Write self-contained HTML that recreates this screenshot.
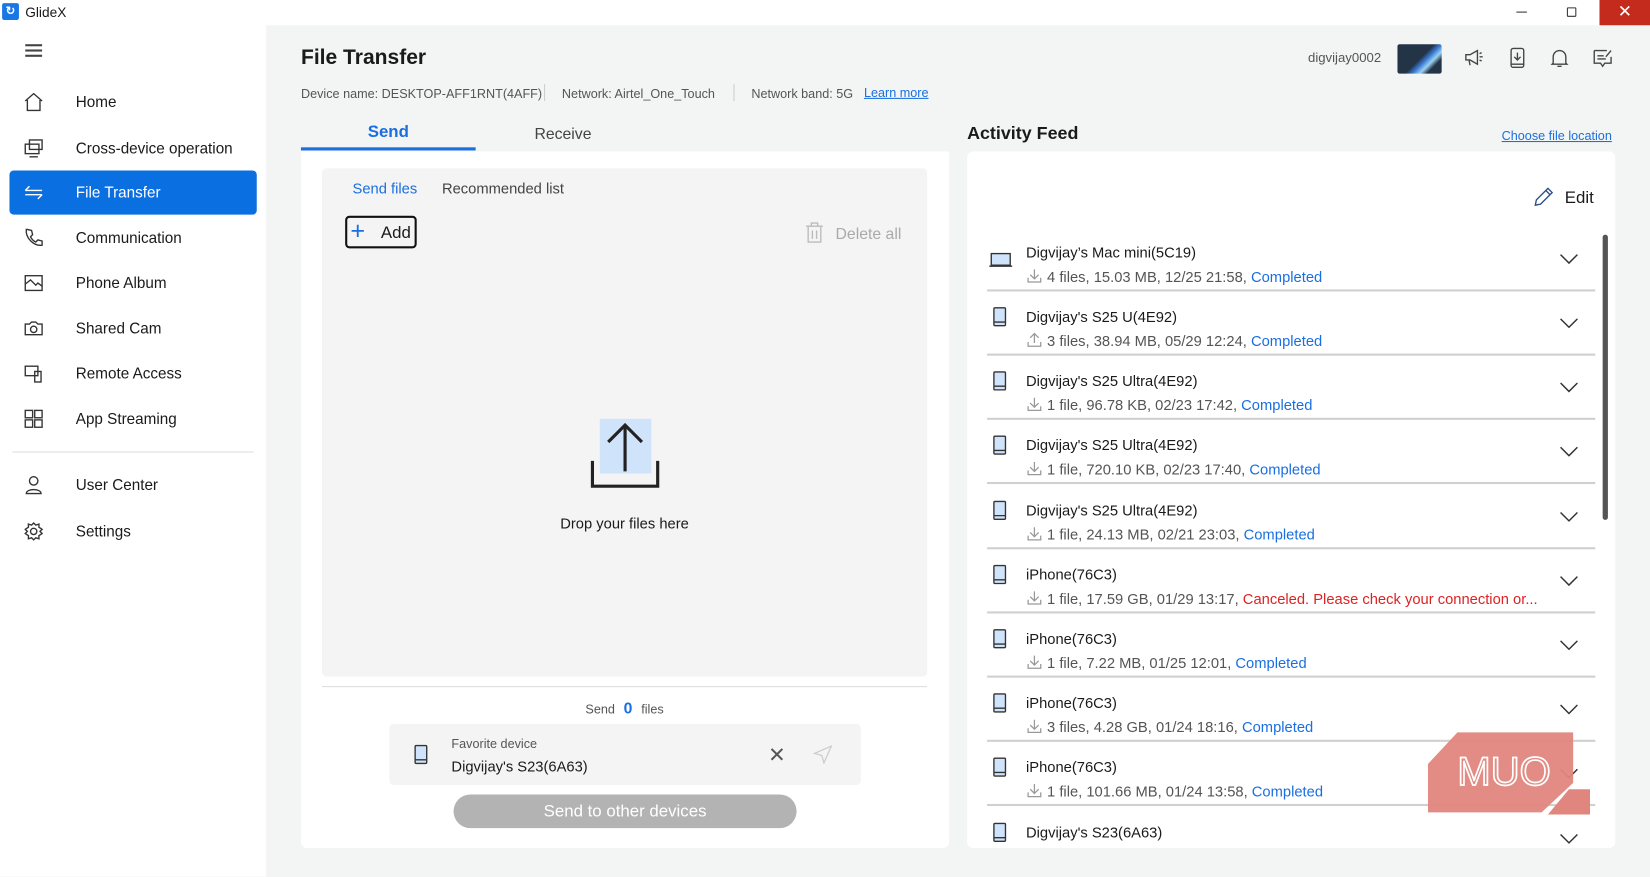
<!DOCTYPE html>
<html><head><meta charset="utf-8"><style>
*{box-sizing:border-box;margin:0;padding:0}
html,body{width:1650px;height:877px;overflow:hidden;background:#f3f4f4;font-family:"Liberation Sans",sans-serif;color:#1a1a1a}
#w{position:absolute;left:0;top:0;width:1568px;height:833px;transform:scale(1.0523);transform-origin:0 0;background:#f3f4f4}
.a{position:absolute;white-space:nowrap}
.nav{position:absolute;left:72px;font-size:14.5px;color:#1a1a1a;transform:translateY(-45%)}
.ic{position:absolute;left:22px;width:20px;height:20px;transform:translateY(-50%)}
.row .t{position:absolute;left:975px;font-size:14px;transform:translateY(-45%)}
.row .s{position:absolute;left:995px;font-size:14px;color:#555;transform:translateY(-45%)}
.c{color:#1a6fe0}.r{color:#d22}
</style></head><body><div id="w">
<div class="a" style="left:0;top:0;width:1568px;height:24px;background:#fff"></div>
<div class="a" style="left:2px;top:3px;width:16px;height:16px;background:#1877e6;border-radius:2px;color:#fff;font-size:11px;text-align:center;line-height:16px;font-weight:bold">↻</div>
<div class="a" style="left:24px;top:4px;font-size:13px">GlideX</div>
<div class="a" style="left:1441px;top:11px;width:10px;height:1px;background:#333"></div>
<div class="a" style="left:1489px;top:7px;width:9px;height:9px;border:1px solid #333;border-radius:1px"></div>
<div class="a" style="left:1520px;top:0;width:48px;height:24px;background:#c42b1c;color:#fff;text-align:center;font-size:16px;line-height:24px">✕</div>
<div class="a" style="left:0;top:24px;width:253px;height:809px;background:#fff"></div>
<div class="a" style="left:24px;top:42px;width:16px;height:2px;background:#444;box-shadow:0 5px 0 #444,0 10px 0 #444"></div>
<div class="a" style="left:9px;top:162px;width:235px;height:42px;background:#0a6fe0;border-radius:4px"></div>
<svg class="ic" style="top:97px" viewBox="0 0 20 20" fill="none" stroke="#333" stroke-width="1.3"><path d="M2 9L10 2l8 7M4 8v10h12V8"/></svg>
<div class="nav" style="top:97px">Home</div>
<svg class="ic" style="top:141px" viewBox="0 0 20 20" fill="none" stroke="#333" stroke-width="1.3"><rect x="2" y="6" width="13" height="9"/><rect x="6" y="2" width="12" height="9"/><path d="M6 18h8"/></svg>
<div class="nav" style="top:141px">Cross-device operation</div>
<svg class="ic" style="top:183px" viewBox="0 0 20 20" fill="none" stroke="#fff" stroke-width="1.3"><path d="M2 8h16M6 4L2 8M18 12H2M14 16l4-4"/></svg>
<div class="nav" style="top:183px;color:#fff">File Transfer</div>
<svg class="ic" style="top:226px" viewBox="0 0 20 20" fill="none" stroke="#333" stroke-width="1.3"><path d="M4 2l4 1 1 4-2 2c1 2 3 4 5 5l2-2 4 1 0 4c-8 1-16-7-15-15z"/></svg>
<div class="nav" style="top:226px">Communication</div>
<svg class="ic" style="top:269px" viewBox="0 0 20 20" fill="none" stroke="#333" stroke-width="1.3"><rect x="2" y="3" width="16" height="14"/><path d="M2 11l5-4 5 5 2-2 4 3"/></svg>
<div class="nav" style="top:269px">Phone Album</div>
<svg class="ic" style="top:312px" viewBox="0 0 20 20" fill="none" stroke="#333" stroke-width="1.3"><path d="M2 6h4l2-2h4l2 2h4v10H2z"/><circle cx="10" cy="11" r="3"/></svg>
<div class="nav" style="top:312px">Shared Cam</div>
<svg class="ic" style="top:355px" viewBox="0 0 20 20" fill="none" stroke="#333" stroke-width="1.3"><rect x="2" y="3" width="12" height="9"/><rect x="11" y="8" width="6" height="10"/></svg>
<div class="nav" style="top:355px">Remote Access</div>
<svg class="ic" style="top:398px" viewBox="0 0 20 20" fill="none" stroke="#333" stroke-width="1.3"><rect x="2" y="2" width="7" height="7"/><rect x="11" y="2" width="7" height="7"/><rect x="2" y="11" width="7" height="7"/><rect x="11" y="11" width="7" height="7"/></svg>
<div class="nav" style="top:398px">App Streaming</div>
<div class="a" style="left:12px;top:429px;width:229px;height:1px;background:#ddd"></div>
<svg class="ic" style="top:461px" viewBox="0 0 20 20" fill="none" stroke="#333" stroke-width="1.3"><circle cx="10" cy="6" r="4"/><path d="M3 18c0-5 14-5 14 0z"/></svg>
<div class="nav" style="top:461px">User Center</div>
<svg class="ic" style="top:505px" viewBox="0 0 20 20" fill="none" stroke="#333" stroke-width="1.3"><circle cx="10" cy="10" r="3"/><path d="M10 2l2 2 3-1 0 3 3 2-2 2 2 2-3 2 0 3-3-1-2 2-2-2-3 1 0-3-3-2 2-2-2-2 3-2 0-3 3 1z"/></svg>
<div class="nav" style="top:505px">Settings</div>
<div class="a" style="left:286px;top:44px;font-size:20px;font-weight:bold">File Transfer</div>
<div class="a" style="left:286px;top:82px;font-size:12px;color:#555">Device name: DESKTOP-AFF1RNT(4AFF)</div>
<div class="a" style="left:517px;top:80px;width:1px;height:16px;background:#ccc"></div>
<div class="a" style="left:534px;top:82px;font-size:12px;color:#555">Network: Airtel_One_Touch</div>
<div class="a" style="left:697px;top:80px;width:1px;height:16px;background:#ccc"></div>
<div class="a" style="left:714px;top:82px;font-size:12px;color:#555">Network band: 5G</div>
<div class="a" style="left:821px;top:81px;font-size:12px;color:#1a6fe0;text-decoration:underline">Learn more</div>
<div class="a" style="left:1243px;top:48px;font-size:12.5px;color:#555">digvijay0002</div>
<div class="a" style="left:1328px;top:42px;width:42px;height:28px;background:linear-gradient(135deg,#243447 50%,#3a7bd5 60%,#9cd3f0 70%,#243447 80%);border-radius:2px"></div>
<svg class="a" style="left:1391px;top:45px" width="20" height="20" viewBox="0 0 20 20" fill="none" stroke="#444" stroke-width="1.3"><path d="M2 7h4l7-4v13l-7-4H2zM5 12l1 5M15 6l2-1M15 9h3M15 12l2 1"/></svg>
<svg class="a" style="left:1432px;top:44px" width="20" height="22" viewBox="0 0 20 22" fill="none" stroke="#444" stroke-width="1.3"><rect x="4" y="2" width="12" height="18" rx="2"/><path d="M10 6v7M7 10l3 3 3-3M4 17h12"/></svg>
<svg class="a" style="left:1472px;top:45px" width="20" height="20" viewBox="0 0 20 20" fill="none" stroke="#444" stroke-width="1.3"><path d="M4 15V9a6 6 0 0112 0v6l1 1H3zM8 18h4"/></svg>
<svg class="a" style="left:1513px;top:45px" width="20" height="20" viewBox="0 0 20 20" fill="none" stroke="#444" stroke-width="1.3"><path d="M2 3h12M2 3v12h6l2 3 2-3h6V9M5 8h6M5 11h8M13 9l5-6"/></svg>
<div class="a" style="left:286px;top:117px;width:166px;text-align:center;font-size:16px;font-weight:bold;color:#1a6fe0">Send</div>
<div class="a" style="left:452px;top:119px;width:166px;text-align:center;font-size:15px;color:#444">Receive</div>
<div class="a" style="left:286px;top:140px;width:166px;height:3px;background:#1a6fe0"></div>
<div class="a" style="left:286px;top:144px;width:616px;height:662px;background:#fff;border-radius:0 0 6px 6px"></div>
<div class="a" style="left:306px;top:160px;width:575px;height:483px;background:#f4f4f4;border-radius:4px"></div>
<div class="a" style="left:335px;top:171px;font-size:14px;color:#1a6fe0">Send files</div>
<div class="a" style="left:420px;top:171px;font-size:14px;color:#444">Recommended list</div>
<div class="a" style="left:328px;top:205px;width:68px;height:31px;border:2px solid #111;border-radius:4px"></div>
<div class="a" style="left:333px;top:206px;font-size:24px;color:#1a6fe0;font-weight:300">+</div>
<div class="a" style="left:362px;top:213px;font-size:16px">Add</div>
<svg class="a" style="left:765px;top:211px" width="18" height="20" viewBox="0 0 18 20" fill="none" stroke="#bbb" stroke-width="1.3"><path d="M1 4h16M6 4V1h6v3M3 4v15h12V4M7 8v8M11 8v8"/></svg>
<div class="a" style="left:794px;top:214px;font-size:15px;color:#aaa">Delete all</div>
<div class="a" style="left:570px;top:398px;width:49px;height:52px;background:#cfe3fb"></div>
<svg class="a" style="left:558px;top:400px" width="72" height="66" viewBox="0 0 72 66" fill="none" stroke="#222" stroke-width="3"><path d="M36 4v44M20 20L36 4l16 16M5 38v24h62V38"/></svg>
<div class="a" style="left:306px;top:489px;width:575px;text-align:center;font-size:14px">Drop your files here</div>
<div class="a" style="left:306px;top:652px;width:575px;height:1px;background:#ddd"></div>
<div class="a" style="left:306px;top:665px;width:575px;text-align:center;font-size:12px;color:#555">Send <b style="color:#1a6fe0;font-size:15px;margin:0 5px">0</b> files</div>
<div class="a" style="left:370px;top:688px;width:448px;height:58px;background:#f4f4f4;border-radius:4px"></div>
<svg class="a" style="left:393px;top:707px" width="14" height="20" viewBox="0 0 14 20" fill="none" stroke="#333" stroke-width="1.3"><rect x="1.5" y="1.5" width="11" height="17" rx="1" fill="#cfe3fb"/><path d="M1.5 15h11"/></svg>
<div class="a" style="left:429px;top:700px;font-size:12px;color:#555">Favorite device</div>
<div class="a" style="left:429px;top:720px;font-size:14px">Digvijay's S23(6A63)</div>
<div class="a" style="left:730px;top:705px;font-size:20px;color:#555">✕</div>
<svg class="a" style="left:773px;top:708px" width="18" height="18" viewBox="0 0 18 18" fill="none" stroke="#ccc" stroke-width="1.2"><path d="M17 1L1 8l7 2 2 7z"/></svg>
<div class="a" style="left:431px;top:755px;width:326px;height:32px;background:#b3b3b3;border-radius:16px;color:#fff;text-align:center;line-height:33px;font-size:16px">Send to other devices</div>
<div class="a" style="left:919px;top:117px;font-size:17px;font-weight:bold">Activity Feed</div>
<div class="a" style="left:1427px;top:122px;font-size:12px;color:#1a6fe0;text-decoration:underline">Choose file location</div>
<div class="a" style="left:919px;top:144px;width:616px;height:662px;background:#fff;border-radius:6px"></div>
<svg class="a" style="left:1457px;top:177px" width="20" height="20" viewBox="0 0 20 20" fill="none" stroke="#2a4f8a" stroke-width="1.3"><path d="M2 18l1-5L14 2l4 4L7 17zM12 4l4 4"/></svg>
<div class="a" style="left:1487px;top:180px;font-size:16px">Edit</div>
<div class="a" style="left:1523px;top:223px;width:5px;height:271px;background:#555;border-radius:3px"></div>
<div class="row">
<svg class="a" style="left:940px;top:239px" width="22" height="16" viewBox="0 0 22 16" fill="none" stroke="#333" stroke-width="1.3"><rect x="2" y="2" width="18" height="11" fill="#cfe3fb"/><path d="M0 14h22"/></svg>
<div class="t" style="top:239px">Digvijay’s Mac mini(5C19)</div><div class="s" style="top:262px">4 files, 15.03 MB, 12/25 21:58, <span class="c">Completed</span></div>
<div class="t" style="top:300px">Digvijay's S25 U(4E92)</div><div class="s" style="top:323px">3 files, 38.94 MB, 05/29 12:24, <span class="c">Completed</span></div>
<div class="t" style="top:361px">Digvijay's S25 Ultra(4E92)</div><div class="s" style="top:384px">1 file, 96.78 KB, 02/23 17:42, <span class="c">Completed</span></div>
<div class="t" style="top:422px">Digvijay's S25 Ultra(4E92)</div><div class="s" style="top:445px">1 file, 720.10 KB, 02/23 17:40, <span class="c">Completed</span></div>
<div class="t" style="top:484px">Digvijay's S25 Ultra(4E92)</div><div class="s" style="top:507px">1 file, 24.13 MB, 02/21 23:03, <span class="c">Completed</span></div>
<div class="t" style="top:545px">iPhone(76C3)</div><div class="s" style="top:568px">1 file, 17.59 GB, 01/29 13:17, <span class="r">Canceled. Please check your connection or...</span></div>
<div class="t" style="top:606px">iPhone(76C3)</div><div class="s" style="top:629px">1 file, 7.22 MB, 01/25 12:01, <span class="c">Completed</span></div>
<div class="t" style="top:667px">iPhone(76C3)</div><div class="s" style="top:690px">3 files, 4.28 GB, 01/24 18:16, <span class="c">Completed</span></div>
<div class="t" style="top:728px">iPhone(76C3)</div><div class="s" style="top:751px">1 file, 101.66 MB, 01/24 13:58, <span class="c">Completed</span></div>
<div class="t" style="top:790px">Digvijay's S23(6A63)</div>
</div>
<div id="rows"></div>
<script>
var ys=[239,300,361,422,484,545,606,667,728,790],h='';
ys.forEach(function(y,i){
 if(i>0)h+='<svg class="a" style="left:943px;top:'+(y-9)+'px" width="14" height="20" viewBox="0 0 14 20" fill="none" stroke="#333" stroke-width="1.3"><rect x="1.5" y="1.5" width="11" height="17" rx="1" fill="#cfe3fb"/><path d="M1.5 15h11"/></svg>';
 h+='<svg class="a" style="left:1482px;top:'+(y+2)+'px" width="18" height="10" viewBox="0 0 18 10" fill="none" stroke="#333" stroke-width="1.4"><path d="M1 1l8 8 8-8"/></svg>';
 if(i<9){
 h+='<svg class="a" style="left:976px;top:'+(y+16)+'px" width="14" height="14" viewBox="0 0 14 14" fill="none" stroke="#999" stroke-width="1.2">'+(i==1?'<path d="M7 10V1M3 5l4-4 4 4M1 9v4h12V9"/>':'<path d="M7 1v9M3 6l4 4 4-4M1 9v4h12V9"/>')+'</svg>';
 h+='<div class="a" style="left:938px;top:'+(y+36)+'px;width:578px;height:2px;background:#d0d0d0"></div>';}
});
document.getElementById('rows').innerHTML=h;
</script>
<svg class="a" style="left:1355px;top:694px" width="156" height="82" viewBox="0 0 156 82">
<path d="M30 2H140V50L110 78H2V32z" fill="#e0867e" opacity=".95"/>
<path d="M136 56L156 56V80H116z" fill="#e0867e"/>
<text x="30" y="52" font-family="Liberation Sans" font-size="38" fill="none" stroke="#fff" stroke-width="1.6">MUO</text>
</svg>
</div></body></html>
